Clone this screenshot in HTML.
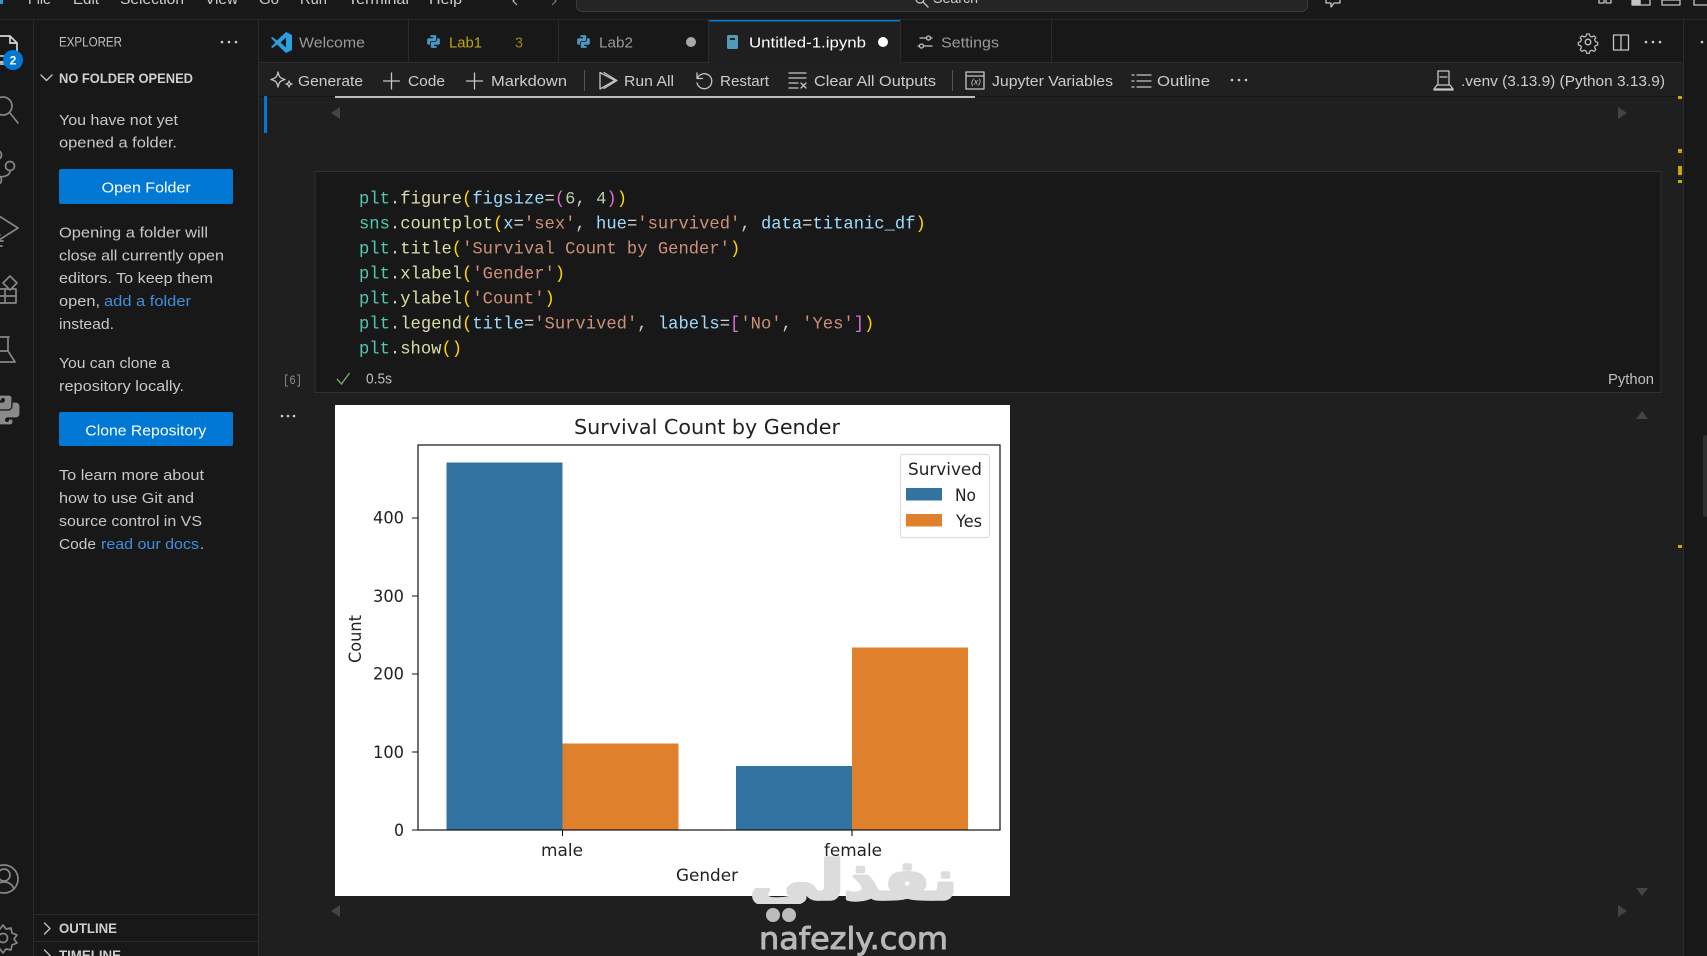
<!DOCTYPE html>
<html><head><meta charset="utf-8"><title>Untitled-1.ipynb</title>
<style>
html,body{margin:0;padding:0;background:#1f1f1f;width:1707px;height:956px;overflow:hidden}
svg{display:block;position:absolute;left:0;top:0;filter:blur(.32px)}
text{font-family:"Liberation Sans","DejaVu Sans",sans-serif;font-size:14.6px;fill:#ccc;white-space:pre}
.t{fill:#cccccc;font-size:15px}
.d{fill:#9a9a9a}
.s{fill:#c8c8c8;font-size:15px}
.l{fill:#3f8fdc;font-size:15px}
.h{font-weight:bold;fill:#d0d0d0;font-size:14px}
.code text,text.code{font-family:"Liberation Mono","DejaVu Sans Mono",monospace;font-size:18px}
.p text{font-family:"DejaVu Sans",sans-serif;fill:#222;font-size:17px}
.i{fill:none;stroke:#c5c5c5;stroke-width:1.3;stroke-linecap:round;stroke-linejoin:round}
.a{fill:none;stroke:#868686;stroke-width:1.7;stroke-linecap:round;stroke-linejoin:round}
</style></head><body>
<svg width="1707" height="956" viewBox="0 0 1707 956" xmlns="http://www.w3.org/2000/svg">
<defs>
<clipPath id="wm"><rect x="740" y="840" width="230" height="64"/></clipPath>
<g id="pysnake"><path d="M1 395h8a3 3 0 0 1 3 3v9a3 3 0 0 1-3 3H2a4 4 0 0 0-4 4v4h-4a4 4 0 0 1-4-4v-8a4 4 0 0 1 4-4h9v-1h-6v-3a3 3 0 0 1 3-3z"/></g>
</defs>
<!-- backgrounds -->
<rect width="1707" height="956" fill="#1f1f1f"/>
<rect width="1707" height="19" fill="#181818"/>
<rect y="19" width="1707" height="1" fill="#2b2b2b"/>
<rect y="20" width="33" height="936" fill="#181818"/>
<rect x="33" y="20" width="225" height="936" fill="#181818"/>
<rect x="33" y="20" width="1" height="936" fill="#2b2b2b"/>
<rect x="258" y="20" width="1" height="936" fill="#2b2b2b"/>
<rect x="1683" y="20" width="24" height="936" fill="#181818"/>
<rect x="1683" y="20" width="1" height="936" fill="#2b2b2b"/>

<!-- title bar -->
<rect x="0" y="-6" width="3" height="10" fill="#2d97d8"/>
<g fill="#ccc">
<text x="28" y="4" textLength="23" lengthAdjust="spacingAndGlyphs">File</text>
<text x="73" y="4" textLength="26" lengthAdjust="spacingAndGlyphs">Edit</text>
<text x="120" y="4" textLength="64" lengthAdjust="spacingAndGlyphs">Selection</text>
<text x="205" y="4" textLength="33" lengthAdjust="spacingAndGlyphs">View</text>
<text x="259" y="4" textLength="20" lengthAdjust="spacingAndGlyphs">Go</text>
<text x="300" y="4" textLength="27" lengthAdjust="spacingAndGlyphs">Run</text>
<text x="348" y="4" textLength="61" lengthAdjust="spacingAndGlyphs">Terminal</text>
<text x="429" y="4" textLength="33" lengthAdjust="spacingAndGlyphs">Help</text>
</g>
<path d="M517 -3l-4 4 4 4" fill="none" stroke="#bbb" stroke-width="1.200"/>
<path d="M552 -3l4 4-4 4" fill="none" stroke="#777" stroke-width="1.200"/>
<rect x="576.500" y="-10" width="731" height="21.500" rx="6" fill="#242424" stroke="#3c3c3c"/>
<circle cx="920" cy="-1" r="4" class="i"/><path class="i" d="M923 2l5 5"/>
<text x="933" y="3" textLength="45" lengthAdjust="spacingAndGlyphs">Search</text>
<path class="i" d="M1326 -6h14v9h-6l-3 4v-4h-5z"/>
<g class="i">
<path d="M1599 -6v9h5v-9M1606 -6v9h5v-9"/>
<path d="M1632 -6v11h18v-11M1632 -6h8v11h-8z" /><rect x="1633" y="-6" width="7" height="11" fill="#c5c5c5"/>
<path d="M1662 -6v11h18v-11M1662 0h18"/>
<path d="M1694 -6v11h13"/>
</g>

<!-- activity bar -->
<path d="M-6 36H10L17 43V62H-6z" fill="none" stroke="#d5d5d5" stroke-width="1.700" stroke-linejoin="round"/>
<path d="M10 36v7h7" fill="none" stroke="#d5d5d5" stroke-width="1.700"/>
<rect x="-2" y="56" width="10" height="8" fill="none" stroke="#d5d5d5" stroke-width="1.500"/>
<circle cx="13" cy="60" r="10" fill="#0078d4"/>
<text x="13" y="64.500" text-anchor="middle" style="font-size:12px;font-weight:bold;fill:#fff">2</text>
<g class="a">
<circle cx="3" cy="106" r="9"/><path d="M10 113l8 10"/>
<circle cx="10" cy="166" r="4.500"/><circle cx="-3" cy="155" r="4.500"/><circle cx="-3" cy="180" r="4.500"/><path d="M10 171c0 5-6 6-13 6"/>
<path d="M-1 216L18 228L-1 240"/><path d="M-4 235h4M0 241h3M-4 246l6 0"/>
<rect x="-6" y="289" width="22" height="14" /><path d="M5 289v14M-6 296H16"/><path d="M10 276l7 7-7 7-7-7z" fill="#181818"/>
<path d="M-1 337h10M8 338v13l7 11H-6"/><path d="M-2 351h10"/>
<circle cx="4" cy="879" r="14"/><circle cx="4" cy="875" r="6"/><path d="M-6 889c2-5 6-7 10-7s8 2 10 7"/>
<circle cx="3" cy="938" r="4.500"/><path d="M3 925l3 4 5-1 1 5 5 2-3 4 3 4-5 2-1 5-5-1-3 4-3-4-5 1-1-5-5-2 3-4-3-4 5-2 1-5 5 1z"/>
</g>
<g fill="#8a8a8a" stroke="#181818" stroke-width="1.200"><use href="#pysnake"/><use href="#pysnake" transform="rotate(180 5 410)"/></g>
<circle cx="3" cy="400" r="2" fill="#181818"/>
<circle cx="7" cy="420" r="2" fill="#181818"/>

<!-- sidebar -->
<text x="59" y="46.500" textLength="63" lengthAdjust="spacingAndGlyphs" style="font-size:14px;fill:#c0c0c0">EXPLORER</text>
<g fill="#ccc"><circle cx="222" cy="42" r="1.300"/><circle cx="229" cy="42" r="1.300"/><circle cx="236" cy="42" r="1.300"/></g>
<path class="i" d="M41 75l5.500 5.500L52 75"/>
<text class="h" x="59" y="83" textLength="134" lengthAdjust="spacingAndGlyphs">NO FOLDER OPENED</text>
<text class="s" x="59" y="125" textLength="119" lengthAdjust="spacingAndGlyphs">You have not yet</text>
<text class="s" x="59" y="147.500" textLength="118" lengthAdjust="spacingAndGlyphs">opened a folder.</text>
<rect x="59" y="169" width="174" height="35" rx="2" fill="#0078d4"/>
<text x="101.700" y="192.500" textLength="89" lengthAdjust="spacingAndGlyphs" style="font-size:15px;fill:#fff">Open Folder</text>
<text class="s" x="59" y="237.500" textLength="149" lengthAdjust="spacingAndGlyphs">Opening a folder will</text>
<text class="s" x="59" y="260.500" textLength="165" lengthAdjust="spacingAndGlyphs">close all currently open</text>
<text class="s" x="59" y="283" textLength="154" lengthAdjust="spacingAndGlyphs">editors. To keep them</text>
<text class="s" x="59" y="306" textLength="41" lengthAdjust="spacingAndGlyphs">open,</text>
<text class="l" x="104" y="306" textLength="87" lengthAdjust="spacingAndGlyphs">add a folder</text>
<text class="s" x="59" y="329" textLength="55" lengthAdjust="spacingAndGlyphs">instead.</text>
<text class="s" x="59" y="368" textLength="111" lengthAdjust="spacingAndGlyphs">You can clone a</text>
<text class="s" x="59" y="391" textLength="125" lengthAdjust="spacingAndGlyphs">repository locally.</text>
<rect x="59" y="412" width="174" height="34" rx="2" fill="#0078d4"/>
<text x="85.300" y="435.500" textLength="121" lengthAdjust="spacingAndGlyphs" style="font-size:15px;fill:#fff">Clone Repository</text>
<text class="s" x="59" y="480" textLength="145" lengthAdjust="spacingAndGlyphs">To learn more about</text>
<text class="s" x="59" y="503" textLength="135" lengthAdjust="spacingAndGlyphs">how to use Git and</text>
<text class="s" x="59" y="526" textLength="143" lengthAdjust="spacingAndGlyphs">source control in VS</text>
<text class="s" x="59" y="549" textLength="37" lengthAdjust="spacingAndGlyphs">Code</text>
<text class="l" x="101" y="549" textLength="98" lengthAdjust="spacingAndGlyphs">read our docs</text>
<text class="s" x="200" y="549">.</text>
<rect x="34" y="914" width="224" height="1" fill="#2b2b2b"/>
<path class="i" d="M44.500 923l5.500 5.500-5.500 5.500"/>
<text class="h" x="59" y="933" textLength="58" lengthAdjust="spacingAndGlyphs">OUTLINE</text>
<rect x="34" y="941" width="224" height="1" fill="#2b2b2b"/>
<path class="i" d="M44.500 950l5.500 5.500-5.500 5.500"/>
<text class="h" x="59" y="960" textLength="62" lengthAdjust="spacingAndGlyphs">TIMELINE</text>

<!-- tabs -->
<rect x="259" y="20" width="1424" height="43" fill="#181818"/>
<rect x="708" y="20" width="192" height="44" fill="#1f1f1f"/>
<rect x="708" y="20" width="192" height="1.500" fill="#0078d4"/>
<g fill="#2b2b2b">
<rect x="408" y="20" width="1" height="43"/><rect x="558" y="20" width="1" height="43"/>
<rect x="708" y="20" width="1" height="43"/><rect x="900" y="20" width="1" height="43"/><rect x="1051" y="20" width="1" height="43"/>
<rect x="259" y="62" width="449" height="1"/><rect x="900" y="62" width="783" height="1"/>
</g>
<!-- vscode logo -->
<path d="M286 32l6 3v15l-6 3-9-8.500-4.500 3.500-1.500-1 4.500-4.500-4.500-4.500 1.500-1 4.500 3.500z M286 37.500l-5.500 5 5.500 5z" fill="#2b9fe0" fill-rule="evenodd"/>
<text class="d" x="299" y="47.500" textLength="66" lengthAdjust="spacingAndGlyphs" style="font-size:15px">Welcome</text>
<g fill="#4a97c4" stroke="#181818" stroke-width="1.800" transform="translate(431.250 -143) scale(.45)"><use href="#pysnake"/><use href="#pysnake" transform="rotate(180 5 410)"/></g>
<text x="449" y="47.500" textLength="33" lengthAdjust="spacingAndGlyphs" style="font-size:15px;fill:#bfa60f">Lab1</text>
<text x="515" y="47.500" textLength="8" lengthAdjust="spacingAndGlyphs" style="font-size:15px;fill:#9c8612">3</text>
<g fill="#4a97c4" stroke="#181818" stroke-width="1.800" transform="translate(581.250 -143) scale(.45)"><use href="#pysnake"/><use href="#pysnake" transform="rotate(180 5 410)"/></g>
<text class="d" x="599" y="47.500" textLength="34" lengthAdjust="spacingAndGlyphs" style="font-size:15px">Lab2</text>
<circle cx="691" cy="42" r="5" fill="#a8a8a8"/>
<rect x="727" y="35" width="11" height="14" rx="1.500" fill="#519aba"/><rect x="730" y="38" width="5" height="2" fill="#1f1f1f"/>
<text x="749" y="47.500" textLength="117" lengthAdjust="spacingAndGlyphs" style="font-size:15px;fill:#fff">Untitled-1.ipynb</text>
<circle cx="883" cy="42" r="5" fill="#fff"/>
<path d="M920 38h6M931 38h1M918 46h1M924 46h8" class="i" stroke-width="1.100"/><circle cx="928.500" cy="38" r="2" class="i"/><circle cx="921.500" cy="46" r="2" class="i"/>
<text class="d" x="941" y="47.500" textLength="58" lengthAdjust="spacingAndGlyphs" style="font-size:15px">Settings</text>
<!-- right editor actions -->
<g class="i" stroke-width="1.400">
<circle cx="1588" cy="42" r="2.800"/><path d="M1586.500 33h3l.6 2.500 2.300 1 2.200-1.400 2.100 2.100-1.400 2.200 1 2.300 2.500.6v3l-2.500.6-1 2.300 1.400 2.200-2.100 2.100-2.200-1.400-2.300 1-.6 2.500h-3l-.6-2.500-2.300-1-2.200 1.400-2.100-2.100 1.400-2.200-1-2.300-2.500-.6v-3l2.500-.6 1-2.300-1.400-2.200 2.100-2.100 2.200 1.400 2.300-1z" transform="translate(158.800 4.200) scale(.9)"/>
<rect x="1613.500" y="35" width="15" height="15"/><path d="M1621 35v15"/>
</g>
<g fill="#ccc"><circle cx="1646" cy="42" r="1.300"/><circle cx="1653" cy="42" r="1.300"/><circle cx="1660" cy="42" r="1.300"/><circle cx="1702" cy="42" r="1.300"/></g>

<!-- toolbar -->
<rect x="259" y="63" width="1424" height="33" fill="#202020"/>
<rect x="259" y="96" width="76" height="1" fill="#151515"/>
<rect x="335" y="96" width="640" height="2" fill="#bdbdbd"/>
<rect x="975" y="96" width="708" height="1" fill="#151515"/>
<g class="i">
<path d="M278 72c1 5 2 6 7 7.500-5 1.500-6 2.500-7 7.500-1-5-2-6-7-7.500 5-1.500 6-2.500 7-7.500z"/>
<path d="M289 81c.4 2 1 2.600 3 3-2 .4-2.600 1-3 3-.4-2-1-2.600-3-3 2-.4 2.600-1 3-3z"/>
<path d="M391.500 73v16M383.500 81h16M474.500 73v16M466.500 81h16"/>
<path d="M600 72.500v16.500l15-8.500z"/><path d="M604 72.500l13 8-13 8"/>
<path d="M697 73v5.500h5.500M697.500 78a7.500 7.500 0 1 1 -.5 5"/>
<path d="M789 73h17M789 78h17M789 83h9M789 88h9M801 83l5 5M806 83l-5 5"/>
<rect x="966" y="72" width="18" height="17"/><path d="M966 76h18"/>
<path d="M1132 75h2M1137 75h14M1132 81h2M1137 81h14M1132 87h2M1137 87h14"/>
<path d="M1438 71h11v14h-11zM1434 89l3-4h13l3 4zM1434 89v1h19v-1M1440 77h7"/>
</g>
<text x="971" y="84.500" style="font-size:8px;font-style:italic;fill:#ccc" textLength="10" lengthAdjust="spacingAndGlyphs">(x)</text>
<rect x="584" y="70" width="1" height="21" fill="#555"/>
<rect x="952" y="70" width="1" height="21" fill="#555"/>
<g style="fill:#ccc">
<text x="298" y="86" textLength="65" lengthAdjust="spacingAndGlyphs" style="font-size:15px">Generate</text>
<text x="408" y="86" textLength="37" lengthAdjust="spacingAndGlyphs" style="font-size:15px">Code</text>
<text x="491" y="86" textLength="76" lengthAdjust="spacingAndGlyphs" style="font-size:15px">Markdown</text>
<text x="624" y="86" textLength="50" lengthAdjust="spacingAndGlyphs" style="font-size:15px">Run All</text>
<text x="720" y="86" textLength="49" lengthAdjust="spacingAndGlyphs" style="font-size:15px">Restart</text>
<text x="814" y="86" textLength="122" lengthAdjust="spacingAndGlyphs" style="font-size:15px">Clear All Outputs</text>
<text x="992" y="86" textLength="121" lengthAdjust="spacingAndGlyphs" style="font-size:15px">Jupyter Variables</text>
<text x="1157" y="86" textLength="53" lengthAdjust="spacingAndGlyphs" style="font-size:15px">Outline</text>
<text x="1461" y="86" textLength="204" lengthAdjust="spacingAndGlyphs" style="font-size:15px">.venv (3.13.9) (Python 3.13.9)</text>
</g>
<g fill="#ccc"><circle cx="1232" cy="80" r="1.300"/><circle cx="1239" cy="80" r="1.300"/><circle cx="1246" cy="80" r="1.300"/></g>

<!-- cell focus bar -->
<rect x="264" y="96" width="3" height="37" fill="#0078d4"/>

<!-- overflow scroll arrows -->
<g fill="#444">
<path d="M331 113l9-6v12z"/><path d="M1627 113l-9-6v12z"/>
<path d="M331 911l9-6v12z"/><path d="M1627 911l-9-6v12z"/>
<path d="M1642 411l6 8h-12z"/><path d="M1642 896l6-8h-12z"/>
</g>

<!-- overview ruler -->
<g fill="#c9a80a">
<rect x="1678" y="96" width="4" height="3"/><rect x="1678" y="149" width="4" height="4"/><rect x="1678" y="166" width="4" height="9"/><rect x="1678" y="180" width="4" height="3"/><rect x="1678" y="545" width="4" height="3"/>
</g>
<rect x="1703" y="435" width="4" height="82" rx="2" fill="#2f2f2f"/>

<!-- code cell -->
<rect x="315" y="171.500" width="1346" height="221" fill="#181818" stroke="#313131"/>
<g class="code" transform="translate(359 0) scale(.955 1)">
<text y="203.500"><tspan fill="#4ec9b0">plt</tspan><tspan fill="#ccc">.</tspan><tspan fill="#dcdcaa">figure</tspan><tspan fill="#ffd700">(</tspan><tspan fill="#9cdcfe">figsize</tspan><tspan fill="#d4d4d4">=</tspan><tspan fill="#da70d6">(</tspan><tspan fill="#b5cea8">6</tspan><tspan fill="#ccc">, </tspan><tspan fill="#b5cea8">4</tspan><tspan fill="#da70d6">)</tspan><tspan fill="#ffd700">)</tspan></text>
<text y="228.500"><tspan fill="#4ec9b0">sns</tspan><tspan fill="#ccc">.</tspan><tspan fill="#dcdcaa">countplot</tspan><tspan fill="#ffd700">(</tspan><tspan fill="#9cdcfe">x</tspan><tspan fill="#d4d4d4">=</tspan><tspan fill="#ce9178">'sex'</tspan><tspan fill="#ccc">, </tspan><tspan fill="#9cdcfe">hue</tspan><tspan fill="#d4d4d4">=</tspan><tspan fill="#ce9178">'survived'</tspan><tspan fill="#ccc">, </tspan><tspan fill="#9cdcfe">data</tspan><tspan fill="#d4d4d4">=</tspan><tspan fill="#9cdcfe">titanic_df</tspan><tspan fill="#ffd700">)</tspan></text>
<text y="253.500"><tspan fill="#4ec9b0">plt</tspan><tspan fill="#ccc">.</tspan><tspan fill="#dcdcaa">title</tspan><tspan fill="#ffd700">(</tspan><tspan fill="#ce9178">'Survival Count by Gender'</tspan><tspan fill="#ffd700">)</tspan></text>
<text y="278.500"><tspan fill="#4ec9b0">plt</tspan><tspan fill="#ccc">.</tspan><tspan fill="#dcdcaa">xlabel</tspan><tspan fill="#ffd700">(</tspan><tspan fill="#ce9178">'Gender'</tspan><tspan fill="#ffd700">)</tspan></text>
<text y="303.500"><tspan fill="#4ec9b0">plt</tspan><tspan fill="#ccc">.</tspan><tspan fill="#dcdcaa">ylabel</tspan><tspan fill="#ffd700">(</tspan><tspan fill="#ce9178">'Count'</tspan><tspan fill="#ffd700">)</tspan></text>
<text y="328.500"><tspan fill="#4ec9b0">plt</tspan><tspan fill="#ccc">.</tspan><tspan fill="#dcdcaa">legend</tspan><tspan fill="#ffd700">(</tspan><tspan fill="#9cdcfe">title</tspan><tspan fill="#d4d4d4">=</tspan><tspan fill="#ce9178">'Survived'</tspan><tspan fill="#ccc">, </tspan><tspan fill="#9cdcfe">labels</tspan><tspan fill="#d4d4d4">=</tspan><tspan fill="#da70d6">[</tspan><tspan fill="#ce9178">'No'</tspan><tspan fill="#ccc">, </tspan><tspan fill="#ce9178">'Yes'</tspan><tspan fill="#da70d6">]</tspan><tspan fill="#ffd700">)</tspan></text>
<text y="353.500"><tspan fill="#4ec9b0">plt</tspan><tspan fill="#ccc">.</tspan><tspan fill="#dcdcaa">show</tspan><tspan fill="#ffd700">()</tspan></text>
</g>
<text class="code" x="283" y="384" textLength="19" lengthAdjust="spacingAndGlyphs" style="font-size:13px;fill:#8c8c8c">[6]</text>
<path d="M337 379l4.500 5 8-11" fill="none" stroke="#73a86a" stroke-width="1.400"/>
<text x="366" y="383.500" textLength="26" lengthAdjust="spacingAndGlyphs" style="font-size:15px;fill:#bdbdbd">0.5s</text>
<text x="1608" y="384" textLength="46" lengthAdjust="spacingAndGlyphs" style="font-size:15px;fill:#c0c0c0">Python</text>
<g fill="#ccc"><circle cx="282" cy="416" r="1.300"/><circle cx="288" cy="416" r="1.300"/><circle cx="294" cy="416" r="1.300"/></g>

<!-- plot output -->
<rect x="335" y="405" width="675" height="491" fill="#fff"/>
<g>
<rect x="446.500" y="462.500" width="116" height="367.500" fill="#3373a1"/>
<rect x="562.500" y="743.500" width="116" height="86.500" fill="#df802d"/>
<rect x="736" y="766" width="116" height="64" fill="#3373a1"/>
<rect x="852" y="647.500" width="116" height="182.500" fill="#df802d"/>
<rect x="418" y="445" width="582" height="385" fill="none" stroke="#111" stroke-width="1.200"/>
<path d="M412 518h6M412 596h6M412 674h6M412 752h6M412 830h6M562.500 830v6M852 830v6" stroke="#111" stroke-width="1.100" fill="none"/>
</g>
<g class="p">
<text x="574" y="434" textLength="266" lengthAdjust="spacingAndGlyphs" style="font-size:20.400px">Survival Count by Gender</text>
<text x="373" y="523.500" textLength="31" lengthAdjust="spacingAndGlyphs">400</text>
<text x="373" y="602" textLength="31" lengthAdjust="spacingAndGlyphs">300</text>
<text x="373" y="679.500" textLength="31" lengthAdjust="spacingAndGlyphs">200</text>
<text x="373" y="758" textLength="31" lengthAdjust="spacingAndGlyphs">100</text>
<text x="394" y="836" textLength="10" lengthAdjust="spacingAndGlyphs">0</text>
<text x="541" y="856" textLength="42" lengthAdjust="spacingAndGlyphs">male</text>
<text x="824" y="856" textLength="58" lengthAdjust="spacingAndGlyphs">female</text>
<text x="676" y="881" textLength="62" lengthAdjust="spacingAndGlyphs">Gender</text>
<text transform="translate(361 663) rotate(-90)" textLength="48" lengthAdjust="spacingAndGlyphs">Count</text>
</g>
<rect x="900.500" y="454.500" width="89" height="83" rx="2.500" fill="#fff" stroke="#ddd" stroke-width="1.200"/>
<rect x="906" y="488" width="36" height="12.500" fill="#3373a1"/>
<rect x="906" y="514" width="36" height="12.500" fill="#df802d"/>
<g class="p">
<text x="908" y="475" textLength="74" lengthAdjust="spacingAndGlyphs">Survived</text>
<text x="955" y="501" textLength="21" lengthAdjust="spacingAndGlyphs">No</text>
<text x="956" y="527" textLength="26" lengthAdjust="spacingAndGlyphs">Yes</text>
</g>

<!-- watermark -->
<g clip-path="url(#wm)">
<text x="750" y="899" textLength="207" lengthAdjust="spacingAndGlyphs" style="font-family:'DejaVu Sans',sans-serif;font-weight:bold;font-size:54px;fill:#dcdcdc;stroke:#dcdcdc;stroke-width:3.500;stroke-linejoin:round">نفذلي</text>
</g>
<circle cx="773" cy="915" r="7" fill="#bcbcbc"/><circle cx="789" cy="915" r="7" fill="#bcbcbc"/>
<text x="759" y="949" textLength="189" lengthAdjust="spacingAndGlyphs" style="font-family:'DejaVu Sans',sans-serif;font-size:30px;fill:#b8b8b8;stroke:#b8b8b8;stroke-width:.9;stroke-linejoin:round">nafezly.com</text>
</svg>
</body></html>
